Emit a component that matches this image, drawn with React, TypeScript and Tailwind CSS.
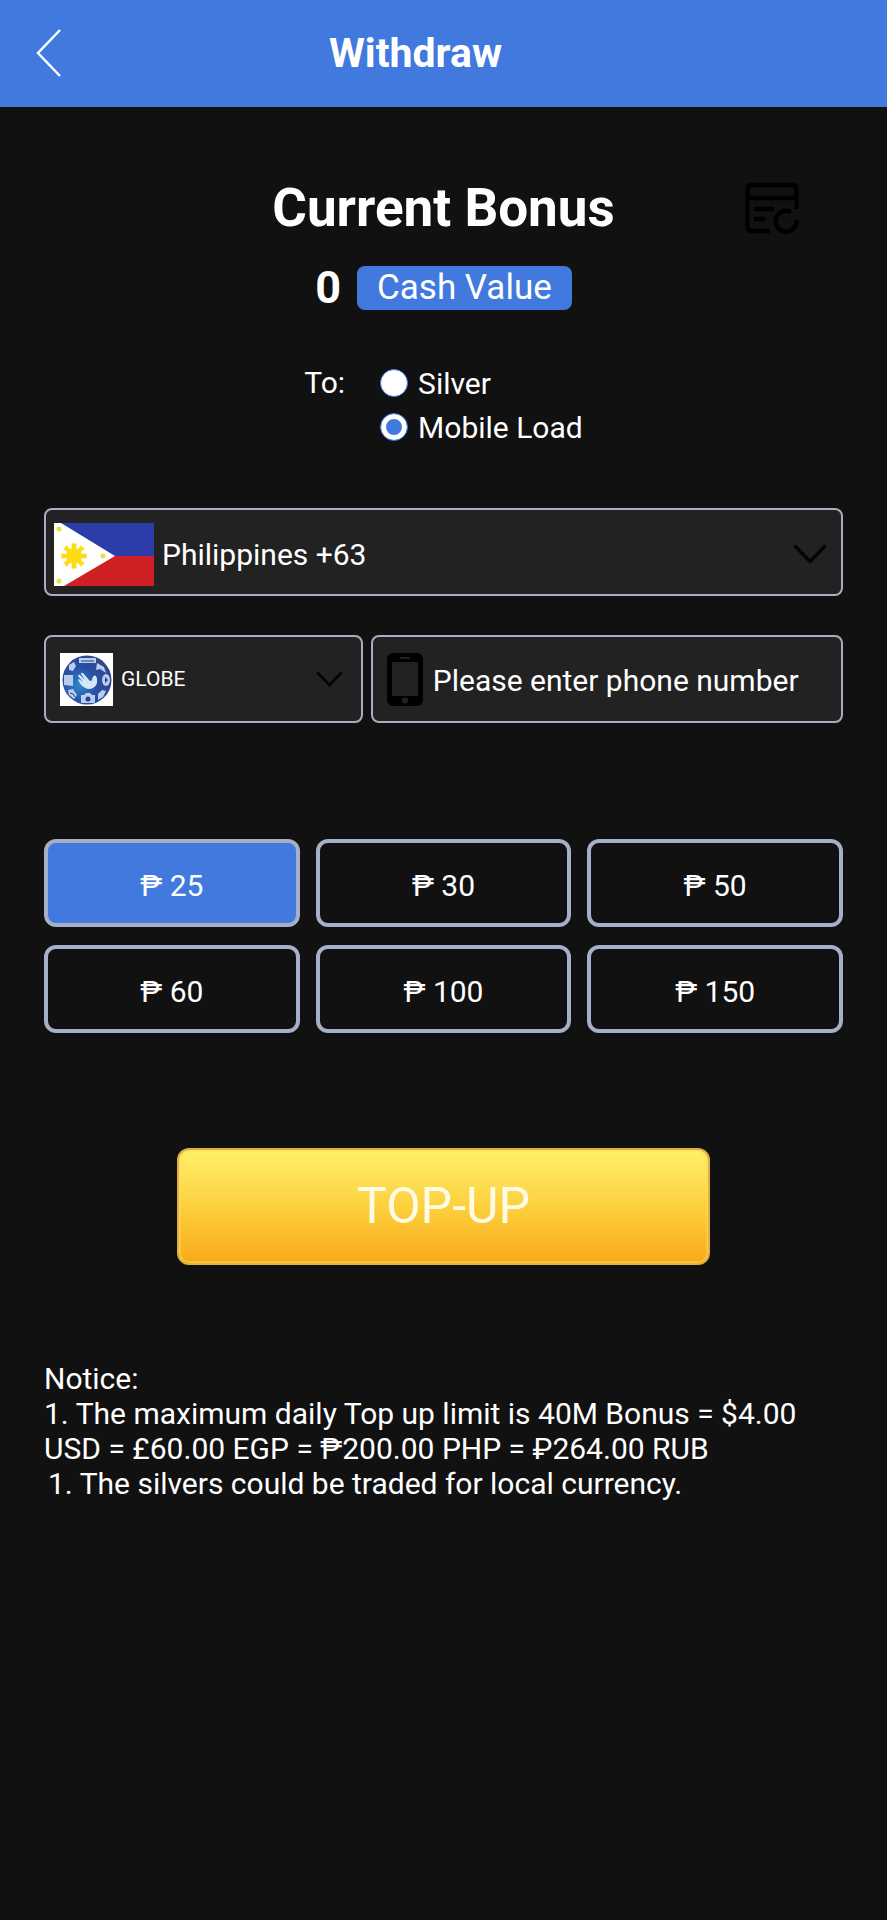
import React, { useState } from "react";

const amounts = [25, 30, 50, 60, 100, 150];

function ChevronDown({ className }: { className: string }) {
  return (
    <svg viewBox="0 0 34 20" className={className} fill="none" stroke="#050505" strokeWidth="3.5" aria-hidden="true">
      <path d="M1.5 1.5 17 17.5 32.5 1.5" />
    </svg>
  );
}

function RecordsIcon() {
  return (
    <svg viewBox="0 0 54 52" className="h-13 w-[54px]" fill="none" stroke="#000" strokeWidth="4.5" aria-hidden="true">
      <path d="M25 49H7.500Q2.500 49 2.500 44V8Q2.500 3 7.500 3H46.500Q51.500 3 51.500 8V27" />
      <path d="M2.500 16H51.500M9 27H29M9 37H20" />
      <path d="M46 30A10.500 10.500 0 1 0 51.500 38" />
    </svg>
  );
}

function PhoneIcon() {
  return (
    <svg viewBox="0 0 36 53" className="h-[53px] w-9 shrink-0" aria-hidden="true">
      <rect width="36" height="53" rx="6" fill="#000" />
      <rect x="5" y="9" width="26" height="34" fill="#222" />
      <rect x="13" y="4" width="10" height="2" rx="1" fill="#222" />
      <circle cx="18" cy="47.500" r="3" fill="#222" />
    </svg>
  );
}

function Flag() {
  const rays = [0, 45, 90, 135, 180, 225, 270, 315];
  return (
    <svg viewBox="0 0 100 63" className="h-[63px] w-[100px] shrink-0" aria-hidden="true">
      <rect width="100" height="33" fill="#2a3da8" />
      <rect y="33" width="100" height="30" fill="#d02025" />
      <path d="M0 0H7L61 33 10 63H0Z" fill="#fff" />
      <g fill="#fbdc15">
        <circle cx="20" cy="33" r="8" />
        {rays.map((r) => (
          <path key={r} d="M18 26 17.500 20 19.500 21 20 18 20.500 21 22.500 20 22 26Z" transform={`rotate(${r} 20 33)`} />
        ))}
      </g>
      <g fill="#e9e04a">
        <circle cx="5" cy="6" r="2.500" />
        <circle cx="49" cy="33" r="2.500" />
        <circle cx="5" cy="58" r="2.500" />
      </g>
    </svg>
  );
}

function GlobeLogo() {
  return (
    <svg viewBox="0 0 53 53" className="h-[53px] w-[53px] shrink-0" aria-hidden="true">
      <defs>
        <radialGradient id="globe" cx="0.35" cy="0.6" r="0.7">
          <stop offset="0" stopColor="#2b88cc" />
          <stop offset="0.5" stopColor="#2850a4" />
          <stop offset="1" stopColor="#344488" />
        </radialGradient>
        <clipPath id="ball">
          <circle cx="27" cy="27" r="24" />
        </clipPath>
      </defs>
      <rect width="53" height="53" fill="#fff" />
      <circle cx="27" cy="27" r="24.500" fill="url(#globe)" />
      <g clipPath="url(#ball)" fill="#b9cdee">
        <path d="M19 5H36V10H19Z" />
        <path d="M4 22 13 22 13 33 4 32Z" />
        <path d="M9 12 14 9 16 13 13 18 9 17Z" />
        <path d="M37 10 44 14 46 20 40 16 36 17Z" />
        <path d="M8 37 13 36 17 42 14 46 9 42Z" />
        <path d="M21 42H24L26 40H30L32 42H35V50H21Z" />
        <path d="M38 41 42 37 46 38 43 44 38 47Z" />
        <ellipse cx="46" cy="27" rx="4" ry="6" />
      </g>
      <path d="M45 24 48 27 45 30Z" fill="#27418f" />
      <circle cx="28" cy="46" r="2.500" fill="#27418f" />
      <path d="M10 40Q14 40 15 44M21 8H34" stroke="#27418f" fill="none" />
      <path
        d="M18 27Q22 35 28 36 35 36 37 30 38 26 36 23 33 21 32 27 31 29 29 27L23 20Q21 19 21 21L25 27 20 22Q18 21 18 23L23 29 19 26Z"
        fill="#d5e5fa"
      />
    </svg>
  );
}

export default function App() {
  const [target, setTarget] = useState("mobile");
  const [amount, setAmount] = useState(25);

  const radioClass =
    "size-7 shrink-0 appearance-none rounded-full border border-[#4279de] bg-white checked:bg-[#4279de] checked:shadow-[inset_0_0_0_5px_#fff]";

  return (
    <div className="min-h-screen bg-[#111] font-['Roboto',sans-serif] text-[30px] leading-[35px] text-white">
      <header className="grid h-[107px] grid-cols-[1fr_auto_1fr] items-center bg-[#4279de] pr-14 pb-0.5">
        <button type="button" aria-label="Back" className="justify-self-start pl-9">
          <svg viewBox="0 0 26 48" className="h-12 w-[26px]" fill="none" stroke="#fff" strokeWidth="2.500">
            <path d="M24 1 2 24 24 47" />
          </svg>
        </button>
        <h1 className="text-[41px] leading-[48px] font-bold">Withdraw</h1>
      </header>

      <main className="px-11 pt-[71px]">
        <section>
          <div className="grid grid-cols-[1fr_auto_1fr] items-center">
            <h2 className="col-start-2 text-[53px] leading-[60px] font-bold">Current Bonus</h2>
            <button type="button" aria-label="Records" className="mr-11 justify-self-end">
              <RecordsIcon />
            </button>
          </div>
          <div className="mt-7 flex h-11 items-center justify-center gap-4">
            <span className="text-[45px] leading-[44px] font-bold">0</span>
            <span className="rounded-lg bg-[#4279de] px-5 text-[35px] leading-[44px]">Cash Value</span>
          </div>
        </section>

        <div role="radiogroup" aria-labelledby="target-label" className="mt-[51px] flex justify-center gap-[35px]">
          <span id="target-label" className="leading-[44px]">
            To:
          </span>
          <div>
            <label className="flex h-11 items-center gap-2.5">
              <input
                type="radio"
                name="target"
                className={radioClass}
                checked={target === "silver"}
                onChange={() => setTarget("silver")}
              />
              Silver
            </label>
            <label className="flex h-11 items-center gap-2.5">
              <input
                type="radio"
                name="target"
                className={radioClass}
                checked={target === "mobile"}
                onChange={() => setTarget("mobile")}
              />
              Mobile Load
            </label>
          </div>
        </div>

        <div className="mt-[59px] flex h-[88px] items-center rounded-lg border-2 border-[#a5afc0] bg-[#222] pt-1 pr-3.5 pl-2">
          <Flag />
          <select aria-label="Country" className="h-full min-w-0 flex-1 appearance-none bg-transparent pl-2 outline-none">
            <option>Philippines +63</option>
          </select>
          <ChevronDown className="h-5 w-[34px] shrink-0" />
        </div>

        <div className="mt-[39px] grid grid-cols-[27fr_40fr] gap-2">
          <div className="flex h-[88px] items-center rounded-lg border-2 border-[#a5afc0] bg-[#222] pr-[18px] pl-3.5">
            <GlobeLogo />
            <select
              aria-label="Carrier"
              className="h-full min-w-0 flex-1 appearance-none bg-transparent pl-2 text-[21px] outline-none"
            >
              <option>GLOBE</option>
            </select>
            <ChevronDown className="h-4 w-[27px] shrink-0" />
          </div>
          <div className="flex h-[88px] items-center gap-2.5 rounded-lg border-2 border-[#a5afc0] bg-[#222] px-3.5">
            <PhoneIcon />
            <input
              type="tel"
              aria-label="Phone number"
              placeholder="Please enter phone number"
              className="h-full min-w-0 flex-1 bg-transparent pt-0.5 outline-none placeholder:text-white"
            />
          </div>
        </div>

        <div className="mt-[116px] grid grid-cols-3 gap-x-4 gap-y-[18px]">
          {amounts.map((value) => (
            <button
              key={value}
              type="button"
              aria-pressed={value === amount}
              onClick={() => setAmount(value)}
              className={`h-[88px] rounded-xl border-4 border-[#a5afc5] pt-1 ${value === amount ? "bg-[#4279de]" : ""}`}
            >
              ₱ {value}
            </button>
          ))}
        </div>

        <button
          type="button"
          className="mx-auto mt-[115px] block h-[117px] w-2/3 rounded-xl border-2 border-[#e0b040] bg-linear-to-b from-[#fff06a] via-[#fcd03d] to-[#f9aa14] pb-0.5 text-[50px] leading-[58px] text-[#fffbe6] shadow-[inset_0_0_2px_1px_#ffd75c]"
        >
          TOP-UP
        </button>

        <section className="mt-[96px]">
          <h3>Notice:</h3>
          <p>1. The maximum daily Top up limit is 40M Bonus = $4.00 USD = £60.00 EGP = ₱200.00 PHP = ₽264.00 RUB</p>
          <p className="pl-1">1. The silvers could be traded for local currency.</p>
        </section>
      </main>
    </div>
  );
}
